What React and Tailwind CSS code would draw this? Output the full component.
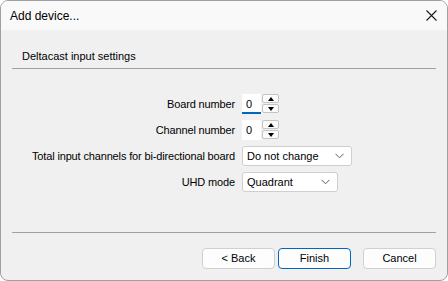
import React from 'react';

const font = { fontFamily: '"Liberation Sans", Arial, sans-serif' };

const SpinEdit = ({ value, focused }) => (
    <div className="flex h-[20px]">
        <div className="relative w-[19px] h-[20px] bg-white flex items-center pl-[4px] text-[11px] text-black">
            {value}
            {focused && <div className="absolute left-0 right-0 bottom-0 h-[2px] bg-[#0067c0]" />}
        </div>
        <div className="ml-[1px] flex flex-col gap-[1px]">
            <div className="w-[17px] h-[9px] bg-[#fbfbfb] border border-[#c4c4c4] rounded-[2px] flex items-center justify-center">
                <div className="w-0 h-0 border-l-[3px] border-r-[3px] border-b-[4px] border-l-transparent border-r-transparent border-b-black" />
            </div>
            <div className="w-[17px] h-[9px] bg-[#fbfbfb] border border-[#c4c4c4] rounded-[2px] flex items-center justify-center">
                <div className="w-0 h-0 border-l-[3px] border-r-[3px] border-t-[4px] border-l-transparent border-r-transparent border-t-black" />
            </div>
        </div>
    </div>
);

const Combo = ({ value, width }) => (
    <div
        className="h-[20px] bg-white border border-[#cfcfcf] rounded-[3px] flex items-center justify-between pl-[4px] pr-[7px] text-[11px] text-black"
        style={{ width }}
    >
        <span>{value}</span>
        <svg width="9" height="6" viewBox="0 0 9 6">
            <path d="M0.5 0.8 L4.5 4.8 L8.5 0.8" fill="none" stroke="#5a5a5a" strokeWidth="1" />
        </svg>
    </div>
);

const Button = ({ children, primary }) => (
    <button
        className={
            primary
                ? 'block w-[73px] h-[21px] bg-[#fdfdfd] border border-[#0067c0] rounded-[4px] text-[11px] leading-[19px] text-black'
                : 'block w-[73px] h-[21px] bg-[#fdfdfd] border border-[#d0d0d0] rounded-[4px] text-[11px] leading-[19px] text-black'
        }
    >
        {children}
    </button>
);

const App = () => {
    const rows = [
        { label: 'Board number', control: <SpinEdit value="0" focused /> },
        { label: 'Channel number', control: <SpinEdit value="0" /> },
        { label: 'Total input channels for bi-directional board', control: <Combo value="Do not change" width={110} /> },
        { label: 'UHD mode', control: <Combo value="Quadrant" width={96} /> },
    ];

    return (
        <div className="w-[448px] h-[281px] bg-white" style={font}>
            <div className="w-full h-full border border-[#a0a0a0] rounded-[8px] overflow-hidden flex flex-col bg-[#f0f0f0]">
                <div className="h-[29px] bg-[#f9f9f9] flex items-center justify-between pl-[9px] pr-[10px] shrink-0">
                    <span className="text-[12px] text-black">Add device...</span>
                    <svg width="11" height="11" viewBox="0 0 11 11">
                        <path d="M0.5 0.5 L10.5 10.5 M10.5 0.5 L0.5 10.5" stroke="#1a1a1a" strokeWidth="1.1" />
                    </svg>
                </div>

                <div className="mx-[11px] pt-[19px] pb-[5px] border-b border-[#a0a0a0]">
                    <div className="pl-[10px] text-[11px] leading-[14px] text-black">Deltacast input settings</div>
                </div>

                <div className="mt-[25px] ml-[11px] grid grid-cols-[223px_auto] gap-x-[7px] gap-y-[6px]">
                    {rows.map((r) => (
                        <React.Fragment key={r.label}>
                            <div className="h-[20px] flex items-center justify-end text-[11px] tracking-[-0.15px] text-black whitespace-nowrap">
                                {r.label}
                            </div>
                            <div className="h-[20px] flex items-center">{r.control}</div>
                        </React.Fragment>
                    ))}
                </div>

                <div className="mx-[11px] mt-[40px] border-b border-[#a0a0a0]" />

                <div className="mt-[15px] mr-[11px] flex items-start justify-end gap-[12px]">
                    <div className="flex gap-[3px]">
                        <Button>&lt; Back</Button>
                        <Button primary>Finish</Button>
                    </div>
                    <Button>Cancel</Button>
                </div>
            </div>
        </div>
    );
};

export default App;
